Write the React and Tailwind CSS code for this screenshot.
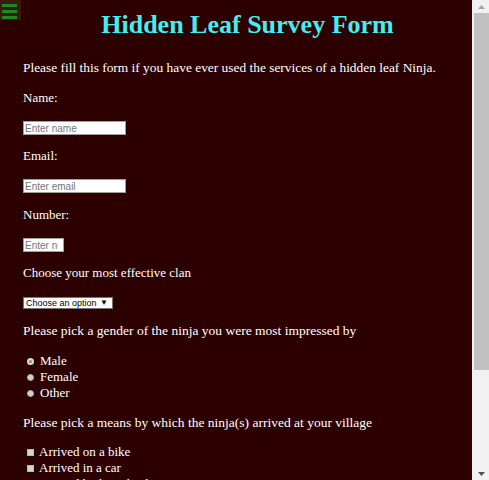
export default function App() {
  const genders = ["Male", "Female", "Other"];
  const means = [
    "Arrived on a bike",
    "Arrived in a car",
    "Arrived by horseback",
    "Arrived on foot",
  ];

  return (
    <div className="flex h-screen overflow-hidden bg-[#f1f1f1]">
      {/* PAGE */}
      <div className="relative flex-1 h-full overflow-hidden bg-[#2d0000] text-white font-['Liberation_Serif','Times_New_Roman',serif] text-[13px] leading-[17px]">
        {/* MENU TOGGLE */}
        <button className="absolute top-0 left-0 w-[21px] h-[20px] bg-[#3b1a12] flex flex-col gap-[3px] pt-[4px] pl-[2px]">
          <span className="block w-[15px] h-[3px] bg-[#1e8a1e]" />
          <span className="block w-[15px] h-[3px] bg-[#1e8a1e]" />
          <span className="block w-[15px] h-[3px] bg-[#1e8a1e]" />
        </button>

        <form className="pl-[23px] pt-[8px] pb-[10px]">
          <h1 className="text-center text-[26px] leading-[34px] font-bold text-[#44eeee]">
            Hidden Leaf Survey Form
          </h1>
          <p className="mt-[17px] text-[13.4px]">
            Please fill this form if you have ever used the services of a
            hidden leaf Ninja.
          </p>

          {/* NAME */}
          <label className="block mt-[13px]">Name:</label>
          <input
            type="text"
            placeholder="Enter name"
            className="block mt-[15px] w-[103px] h-[14px] bg-white border border-[#a0a0a0] px-[1px] text-[10px] text-black placeholder-[#757575] font-['Liberation_Sans',Arial,sans-serif] outline-none"
          />

          {/* EMAIL */}
          <label className="block mt-[12px]">Email:</label>
          <input
            type="email"
            placeholder="Enter email"
            className="block mt-[15px] w-[103px] h-[14px] bg-white border border-[#a0a0a0] px-[1px] text-[10px] text-black placeholder-[#757575] font-['Liberation_Sans',Arial,sans-serif] outline-none"
          />

          {/* NUMBER */}
          <label className="block mt-[13px]">Number:</label>
          <input
            type="text"
            placeholder="Enter number"
            className="block mt-[15px] w-[41px] h-[14px] bg-white border border-[#a0a0a0] pl-[1px] pr-[5px] text-[10px] text-black placeholder-[#757575] font-['Liberation_Sans',Arial,sans-serif] outline-none"
          />

          {/* CLAN */}
          <label className="block mt-[12px]">Choose your most effective clan</label>
          <div className="relative mt-[16px] w-[90px] h-[12px]">
            <select className="appearance-none block w-[90px] h-[12px] bg-white border border-[#767676] pl-[2px] text-[9px] leading-[10px] text-black font-['Liberation_Sans',Arial,sans-serif] outline-none">
              <option>Choose an option</option>
              <option>Uchiha</option>
              <option>Hyuga</option>
              <option>Nara</option>
            </select>
            <span className="absolute right-[5px] top-0 text-[8px] leading-[12px] text-black pointer-events-none">
              ▼
            </span>
          </div>

          {/* GENDER */}
          <p className="mt-[13px] text-[13.5px]">
            Please pick a gender of the ninja you were most impressed by
          </p>
          <div className="mt-[14px] leading-[16px]">
            {genders.map((g, i) => (
              <label key={g} className="flex items-center h-[16px] pl-[4px]">
                <input
                  type="radio"
                  name="gender"
                  defaultChecked={i === 0}
                  className="appearance-none w-[7px] h-[7px] rounded-full bg-[#cfcfcf] border border-[#b0b0b0] checked:bg-[#8a8a8a] checked:border-[2px] checked:border-[#d8d8d8] mr-[6px]"
                />
                {g}
              </label>
            ))}
          </div>

          {/* MEANS */}
          <p className="mt-[13px] text-[13.5px]">
            Please pick a means by which the ninja(s) arrived at your village
          </p>
          <div className="mt-[13px] leading-[16px]">
            {means.map((m) => (
              <label key={m} className="flex items-center h-[16px] pl-[4px]">
                <input
                  type="checkbox"
                  className="appearance-none w-[7px] h-[7px] bg-[#d4d4d4] border border-[#b8b8b8] mr-[5px]"
                />
                {m}
              </label>
            ))}
          </div>

          {/* COMMENTS */}
          <label className="block mt-[13px]">Any comments or suggestions?</label>
          <textarea
            placeholder="Enter your comment here..."
            className="block mt-[15px] w-[180px] h-[36px] bg-white border border-[#a0a0a0] px-[2px] text-[10px] text-black placeholder-[#757575] font-['Liberation_Sans',Arial,sans-serif] outline-none resize-none"
          />
        </form>
      </div>

      {/* SCROLLBAR */}
      <div className="w-[17px] h-full flex flex-col bg-[#f1f1f1]">
        <div className="h-[13px] flex items-center justify-center pl-[2px]">
          <svg width="7" height="4" viewBox="0 0 7 4">
            <polygon points="3.5,0 7,4 0,4" fill="#a3a3a3" />
          </svg>
        </div>
        <div className="h-[357px] ml-[2px] bg-[#c1c1c1]" />
        <div className="flex-1" />
        <div className="h-[13px] flex items-center justify-center pl-[2px]">
          <svg width="7" height="4" viewBox="0 0 7 4">
            <polygon points="0,0 7,0 3.5,4" fill="#505050" />
          </svg>
        </div>
      </div>
    </div>
  );
}
